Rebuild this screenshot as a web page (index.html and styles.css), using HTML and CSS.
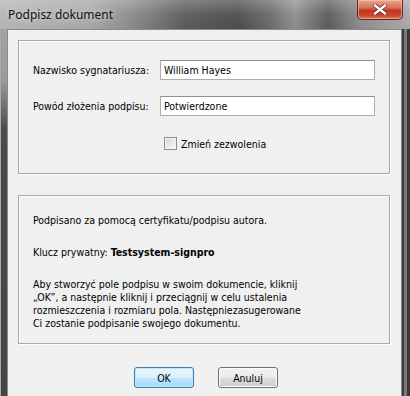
FILE: index.html
```html
<!DOCTYPE html>
<html lang="pl">
<head>
    <meta charset="UTF-8">
    <title>Podpisz dokument</title>
    <link rel="stylesheet" href="styles.css">
</head>
<body>

    <div class="window">
        <!-- pasek tytułu -->
        <div class="titlebar">
            <span class="title">Podpisz dokument</span>
            <button class="close-btn" type="button" aria-label="Zamknij">
                <svg width="14" height="11" viewBox="0 0 14 11">
                    <path d="M2 1.5 L12 9.5 M12 1.5 L2 9.5" stroke="#6a2418" stroke-width="4" stroke-linecap="square"/>
                    <path d="M2 1.5 L12 9.5 M12 1.5 L2 9.5" stroke="#ffffff" stroke-width="2.4" stroke-linecap="square"/>
                </svg>
            </button>
        </div>

        <div class="client">
            <!-- dane podpisu -->
            <div class="group group-fields">
                <div class="field-row">
                    <label for="signer">Nazwisko sygnatariusza:</label>
                    <input type="text" id="signer" value="William Hayes">
                </div>
                <div class="field-row">
                    <label for="reason">Powód złożenia podpisu:</label>
                    <input type="text" id="reason" value="Potwierdzone">
                </div>
                <div class="check-row">
                    <span class="checkbox"></span>
                    <span>Zmień zezwolenia</span>
                </div>
            </div>

            <!-- informacje -->
            <div class="group group-info">
                <p>Podpisano za pomocą certyfikatu/podpisu autora.</p>
                <p>Klucz prywatny: <b>Testsystem-signpro</b></p>
                <p>Aby stworzyć pole podpisu w swoim dokumencie, kliknij<br>„OK”, a następnie kliknij i przeciągnij w celu ustalenia<br>rozmieszczenia i rozmiaru pola. Następniezasugerowane<br>Ci zostanie podpisanie swojego dokumentu.</p>
            </div>

            <div class="buttons">
                <button type="button" class="btn btn-default">OK</button>
                <button type="button" class="btn">Anuluj</button>
            </div>
        </div>
    </div>

</body>
</html>
```

FILE: styles.css
```css
body {
    margin: 0;
    padding: 0;
    overflow: hidden;
    font-family: "DejaVu Sans Condensed", "DejaVu Sans", sans-serif;
    font-size: 10.5px;
    color: #000;
}

.window {
    width: 410px;
    height: 396px;
    display: flex;
    flex-direction: column;
    background:
        linear-gradient(to right, #a9a9a9 0, #a9a9a9 1px, transparent 1px, transparent 402px, #3a3a3a 402px, #3a3a3a 404px, #7a7a7a 404px, #7a7a7a 407px, #3a3a3a 407px),
        linear-gradient(to bottom, #a8a8a8 0, #9a9a9a 80px, #4a4a4a 130px, #444444 100%);
}

/* pasek tytułu */
.titlebar {
    height: 29px;
    display: flex;
    justify-content: space-between;
    align-items: flex-start;
    background:
        linear-gradient(to bottom, rgba(255, 255, 255, 0.25) 0, rgba(255, 255, 255, 0.05) 50%, rgba(0, 0, 0, 0) 100%),
        linear-gradient(to right, #b4b4b4 0, #a6a6a6 22%, #8a8a8a 32%, #5a5a5a 45%, #4c4c4c 58%, #6a6a6a 66%, #8e8e8e 72%, #5a5a5a 80%, #8c8c8c 88%, #a8a8a8 100%);
}

.title {
    font-family: "Noto Sans", "DejaVu Sans", sans-serif;
    font-size: 12px;
    padding: 6px 0 0 8px;
    color: #111;
    text-shadow: 0 0 6px rgba(255, 255, 255, 0.8);
}

.close-btn {
    width: 46px;
    height: 20px;
    margin-right: 7px;
    padding: 0;
    border: 1px solid #5c2a20;
    border-top: none;
    border-radius: 0 0 5px 5px;
    background: linear-gradient(to bottom, #e9a58f 0, #d6735a 40%, #c2381f 55%, #c5462c 80%, #dd7a5e 100%);
    box-shadow: inset 0 0 0 1px rgba(255, 210, 190, 0.5);
    display: flex;
    align-items: center;
    justify-content: center;
}

/* obszar klienta */
.client {
    flex: 1;
    margin: 0 8px 0 7px;
    background-color: #f0f0f0;
    border: 1px solid #8a8a8a;
    border-bottom: none;
}

.group {
    margin: 0 11px 0 10px;
    border: 1px solid #a9a9a9;
    box-shadow: inset 1px 1px 0 #ffffff, 1px 1px 0 #ffffff;
    box-sizing: border-box;
}

.group-fields {
    margin-top: 10px;
    height: 134px;
    padding: 19px 14px 0 14px;
}

.field-row {
    display: flex;
    align-items: center;
    height: 20px;
    margin-bottom: 16px;
}

.field-row label {
    width: 127px;
    flex-shrink: 0;
}

.field-row input {
    flex: 1;
    height: 20px;
    box-sizing: border-box;
    margin: 0;
    padding: 0 3px;
    border: 1px solid #abadb3;
    border-top-color: #8e9099;
    background: #ffffff;
    font-family: inherit;
    font-size: 10.5px;
    color: #000;
}

.check-row {
    display: flex;
    align-items: center;
    gap: 4px;
    margin-top: 21px;
    padding-left: 131px;
}

.checkbox {
    width: 11px;
    height: 11px;
    border: 1px solid #8e8f8f;
    background: linear-gradient(135deg, #d6d6d6 0, #ebebeb 60%, #f6f6f6 100%);
    box-shadow: inset 0 0 0 1px #f4f4f4;
}

.group-info {
    margin-top: 21px;
    height: 149px;
    padding: 18px 14px 0 14px;
}

.group-info p {
    margin: 0 0 19px 0;
    line-height: 13px;
}

.buttons {
    display: flex;
    justify-content: center;
    gap: 24px;
    margin-top: 23px;
    padding-left: 3px;
}

.btn {
    width: 60px;
    height: 21px;
    padding: 0;
    border: 1px solid #707070;
    border-radius: 3px;
    background: linear-gradient(to bottom, #f2f2f2 0, #ebebeb 50%, #dddddd 50%, #cfcfcf 100%);
    box-shadow: inset 0 0 0 1px #fcfcfc;
    font-family: inherit;
    font-size: 10.5px;
    color: #000;
}

.btn-default {
    border-color: #3c7fb1;
    background: linear-gradient(to bottom, #eaf6fd 0, #d9f0fc 50%, #bee6fd 50%, #a7d9f5 100%);
    box-shadow: inset 0 0 0 1px #c4e5f6;
}
```
